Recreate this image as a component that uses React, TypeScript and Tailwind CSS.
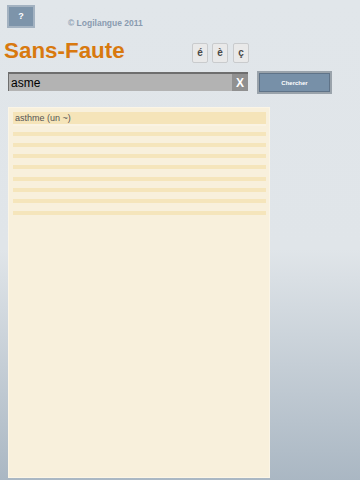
import React from "react";

const stripes = [0, 1, 2, 3, 4, 5, 6, 7];

export default function App() {
  return (
    <div
      className="w-[360px] h-[480px] overflow-hidden flex flex-col bg-[linear-gradient(to_bottom,#e1e6ea_0%,#e0e5e9_52%,#aab7c3_100%)]"
      style={{ fontFamily: '"Liberation Sans", Arial, sans-serif' }}
    >
      {/* top row */}
      <div className="flex items-start pt-[5px] pl-[7px] h-[40px]">
        <div className="w-[28px] h-[23px] bg-[#7d94aa] border-[2px] border-[#a3b2c1] flex items-center justify-center text-white text-[9px] font-bold leading-none">
          ?
        </div>
        <div className="ml-[33px] mt-[14px] text-[8.5px] leading-none font-bold text-[#8a9bb0]">
          © Logilangue 2011
        </div>
      </div>

      {/* title row */}
      <div className="flex items-start h-[31px]">
        <div className="w-[192px] pl-[4px] text-[22.4px] leading-[22px] font-bold text-[#d8790f]">
          Sans-Faute
        </div>
        <div className="flex gap-[4px] mt-[3px]">
          {["é", "è", "ç"].map((c, i) => (
            <div
              key={c}
              className={`w-[16px] h-[20px] rounded-[2px] bg-[#e9e9e9] border border-[#c9cbcd] flex items-center justify-center text-[10px] font-bold text-[#4a4a4a] leading-none ${i === 2 ? "ml-[1px]" : ""}`}
            >
              {c}
            </div>
          ))}
        </div>
      </div>

      {/* search row */}
      <div className="flex items-start h-[36px]">
        <div className="ml-[8px] mt-[1px] w-[240px] h-[19px] bg-[#b3b3b3] border-t-[2px] border-l-[1px] border-[#6e6e6e] flex items-center">
          <span className="ml-[2px] text-[12px] leading-none text-black flex-1">asme</span>
          <div className="w-[16px] h-[17px] bg-[#909090] flex items-center justify-center text-white font-bold text-[12px] leading-none">
            X
          </div>
        </div>
        <div className="ml-[9px] w-[75px] h-[23px] bg-[#7790a8] border-[2px] border-[#9aa3ab] shadow-[inset_0_0_0_1px_#5f7388] flex items-center justify-center text-white text-[6px] font-bold leading-none">
          Chercher
        </div>
      </div>

      {/* list panel */}
      <div className="ml-[8px] w-[262px] h-[371px] bg-[#f8f0dc] border border-[#fbf5e6] flex flex-col pl-[4px] pr-[3px] pt-[4px]">
        <div className="h-[12px] bg-[#f5e4b9] flex items-center pl-[2px] text-[9px] leading-none text-[#555]">
          asthme (un ~)
        </div>
        <div className="h-[2px] bg-[#faf3e3]" />
        <div className="flex flex-col pt-[5.5px]">
          {stripes.map((s) => (
            <div key={s} className="h-[11.3px] flex flex-col">
              <div className="h-[4px] bg-[#f5e5bb]" />
            </div>
          ))}
        </div>
      </div>
    </div>
  );
}
